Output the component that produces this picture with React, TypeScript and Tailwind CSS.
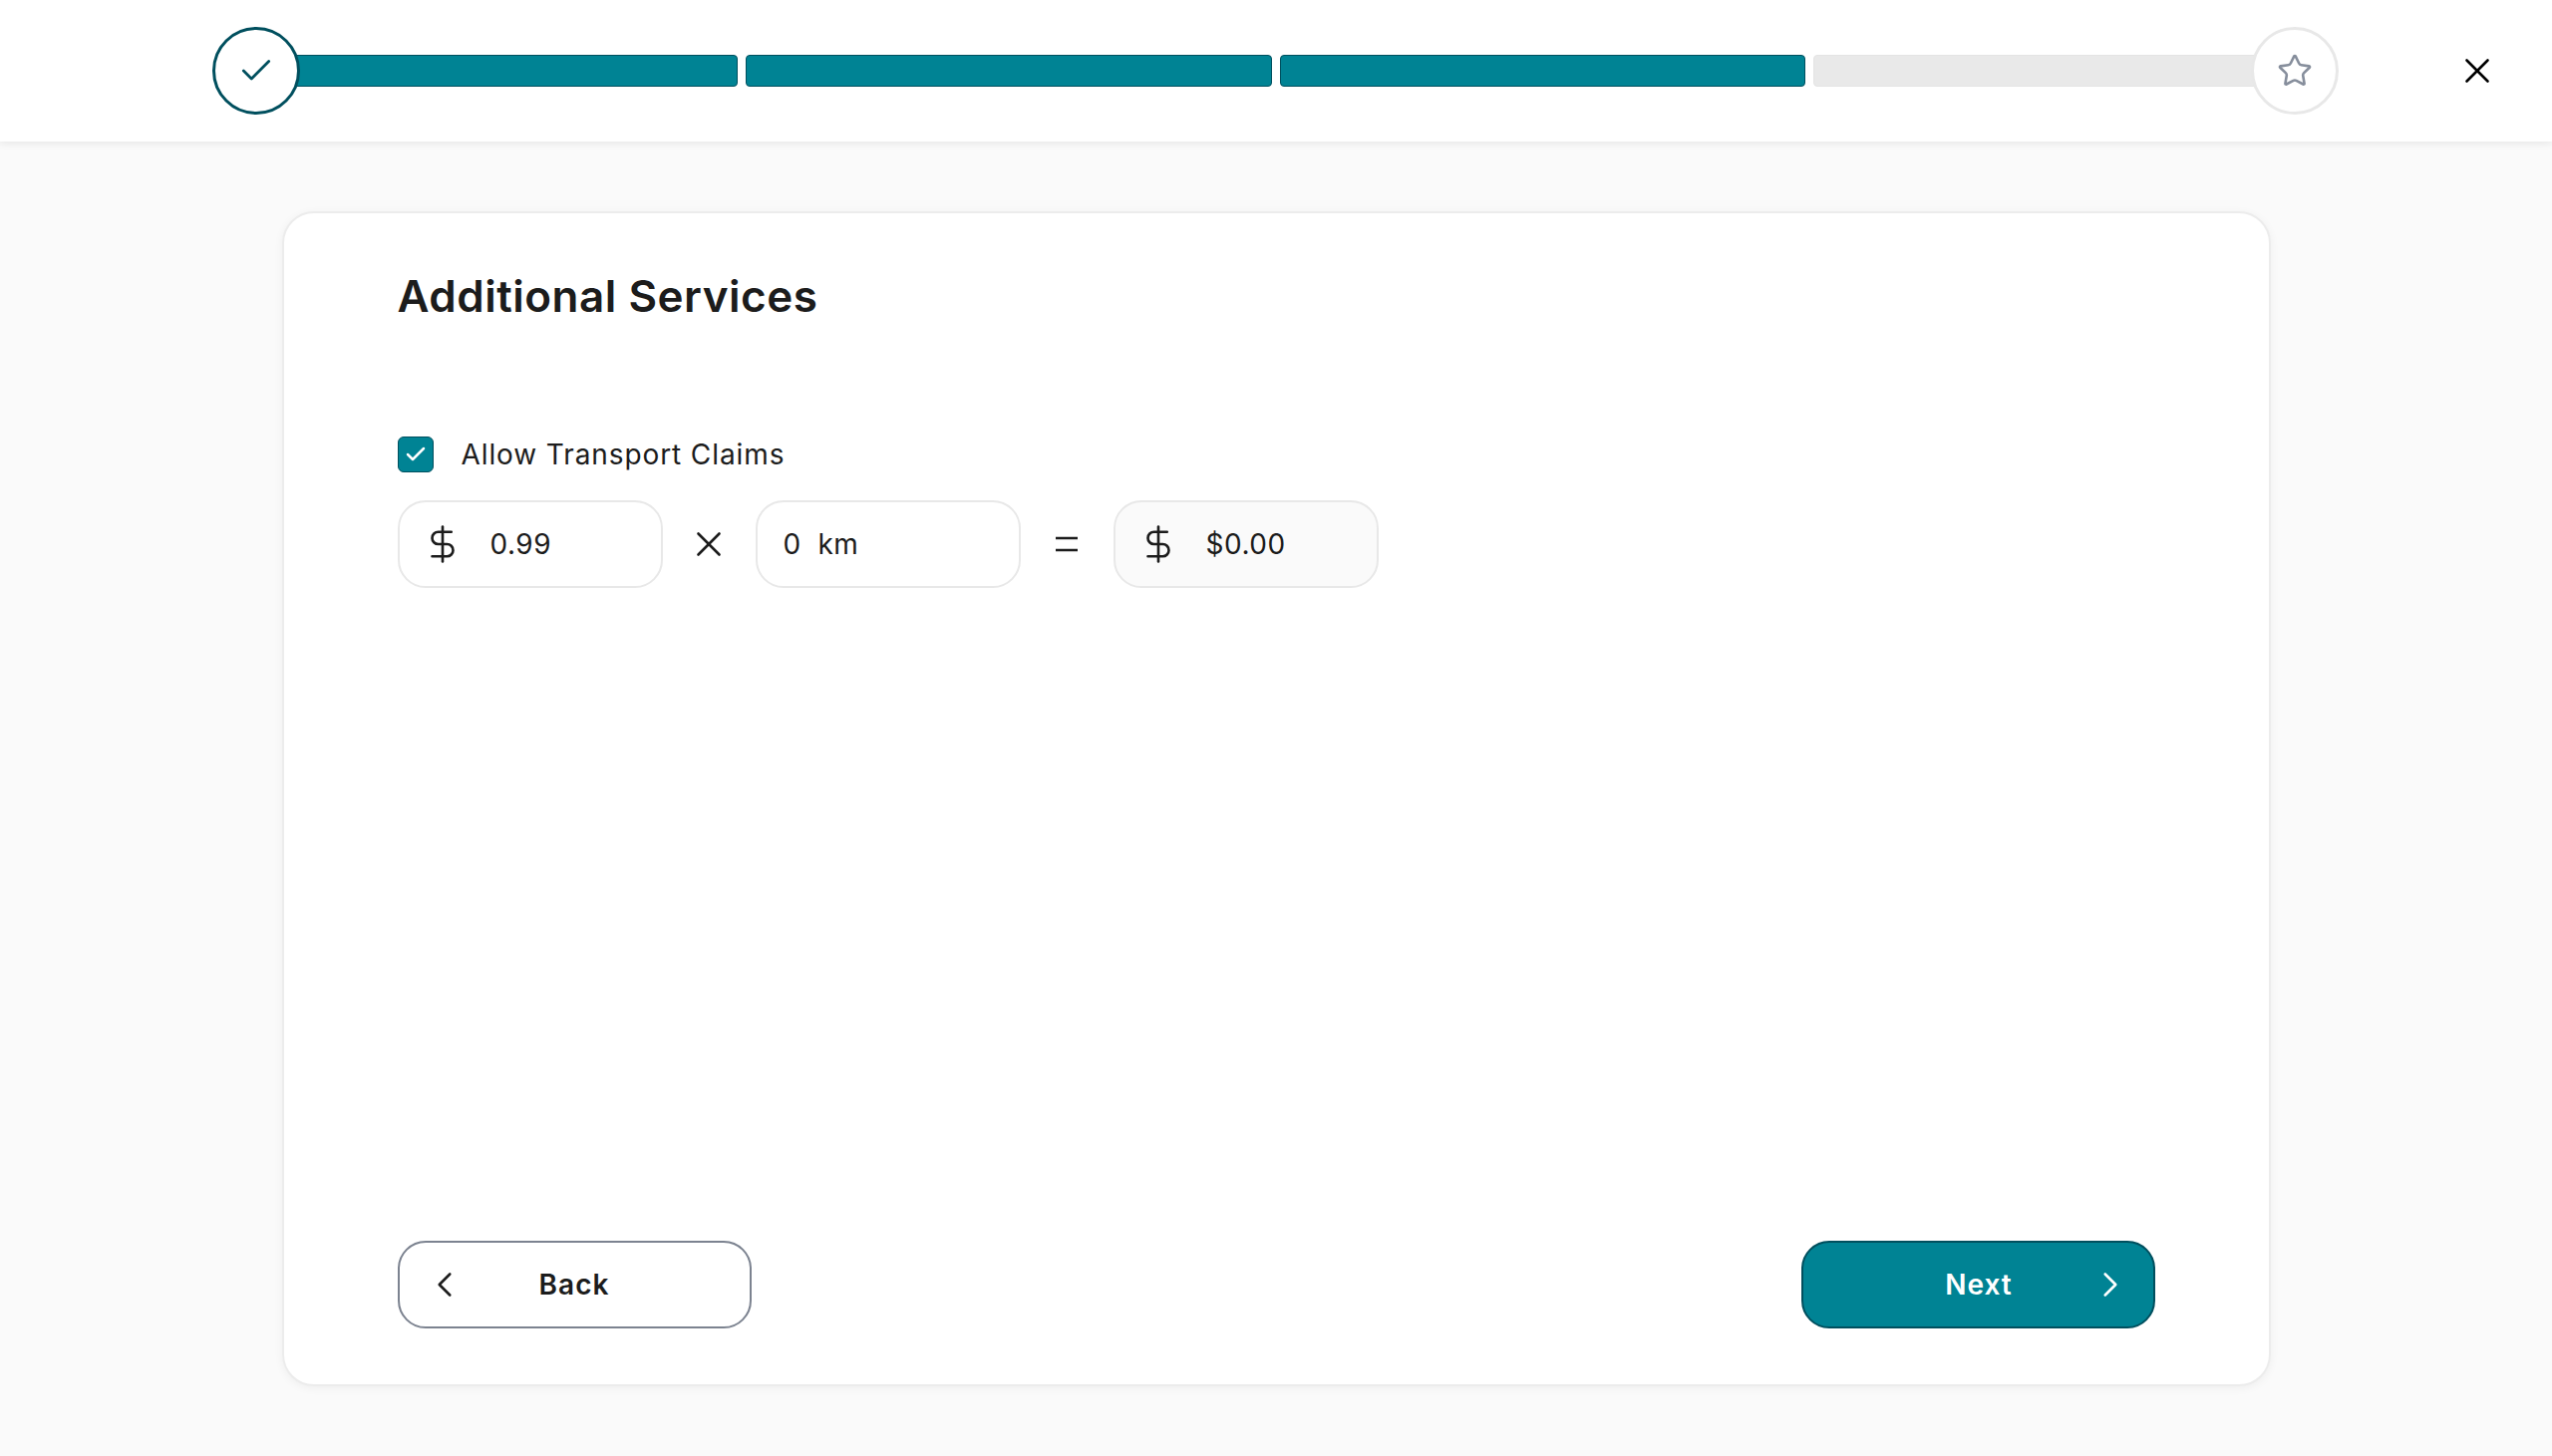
import { Check, ChevronLeft, ChevronRight, DollarSign, Star, X } from 'lucide-react';

const font = "font-['Inter','Noto_Sans',sans-serif]";

const ProgressBar = () => {
  return (
    <div className="relative grid flex-1 grid-cols-4 items-center gap-2">
      <div className="ml-10 h-8 rounded-[4px] border border-[#004f5e] bg-[#008394]" />
      <div className="h-8 rounded-[4px] border border-[#004f5e] bg-[#008394]" />
      <div className="h-8 rounded-[4px] border border-[#004f5e] bg-[#008394]" />
      <div className="mr-10 h-8 rounded-[4px] border border-[#e4e4e4] bg-[#e9e9e9]" />
      <div className="absolute left-0 top-[-28px] flex h-[88px] w-[88px] items-center justify-center rounded-full border-[3px] border-[#004f5e] bg-white">
        <Check size={38} strokeWidth={1.75} className="text-[#004f5e]" />
      </div>
      <div className="absolute right-0 top-[-28px] flex h-[88px] w-[88px] items-center justify-center rounded-full border-[3px] border-[#e8e8e8] bg-white">
        <Star size={36} strokeWidth={1.75} className="text-[#868e9c]" />
      </div>
    </div>
  );
};

const Field = ({ dollar, value, shaded }: { dollar?: boolean; value: string; shaded?: boolean }) => (
  <div
    className={`flex h-[88px] w-[266px] items-center rounded-[28px] border-2 border-[#e8e8e8] text-[28px] tracking-[0.5px] text-[#1c1c1c] ${
      shaded ? 'bg-[#fafafa]' : 'bg-white'
    } ${dollar ? 'pl-[22px]' : 'pl-[26px]'}`}
  >
    {dollar && <DollarSign size={42} strokeWidth={1.5} className="mr-[27px] shrink-0 text-[#1c1c1c]" />}
    <span className="whitespace-pre">{value}</span>
  </div>
);

const App = () => {
  return (
    <div className={`flex min-h-[1461px] flex-col bg-[#fafafa] ${font}`}>
      <header className="flex h-[142px] items-center bg-white pl-[213px] pr-[54px] shadow-[0_2px_8px_rgba(0,0,0,0.08)]">
        <ProgressBar />
        <button className="ml-[118px] flex h-[42px] w-[42px] items-center justify-center text-black">
          <X size={42} strokeWidth={1.5} />
        </button>
      </header>

      <main className="flex flex-1 justify-center pt-[70px]">
        <section className="flex h-[1179px] w-[1995px] flex-col justify-between rounded-[32px] border-2 border-[#ececec] bg-white px-[114px] pb-[56px] pt-[57px] shadow-[0_2px_10px_rgba(0,0,0,0.05)]">
          <div>
            <h1 className="text-[44px] font-semibold leading-[52px] tracking-[0.5px] text-[#1c1c1c]">Additional Services</h1>

            <label className="mt-[115px] flex items-center gap-[28px] text-[28px] leading-9 tracking-[0.9px] text-[#1c1c1c]">
              <span className="flex h-9 w-9 items-center justify-center rounded-[6px] border border-[#004f5e] bg-[#008394]">
                <Check size={24} strokeWidth={2.5} className="text-white" />
              </span>
              Allow Transport Claims
            </label>

            <div className="mt-[28px] flex items-center">
              <Field dollar value="0.99" />
              <div className="flex w-[93px] items-center justify-center text-[#1c1c1c]">
                <X size={42} strokeWidth={1.5} />
              </div>
              <Field value="0  km" />
              <div className="flex w-[93px] items-center justify-center">
                <svg width="22" height="16" viewBox="0 0 22 16" fill="none" stroke="#1c1c1c" strokeWidth="2.5">
                  <path d="M0 2h22M0 14h22" />
                </svg>
              </div>
              <Field dollar shaded value="$0.00" />
            </div>
          </div>

          <div className="flex justify-between">
            <button className="grid h-[88px] w-[355px] grid-cols-[1fr_auto_1fr] items-center rounded-[28px] border-2 border-[#7c8390] bg-white px-6 text-[28px] font-semibold tracking-[1px] text-[#1c1c1c]">
              <ChevronLeft size={42} strokeWidth={1.5} />
              <span>Back</span>
              <span />
            </button>
            <button className="grid h-[88px] w-[355px] grid-cols-[1fr_auto_1fr] items-center rounded-[28px] border-2 border-[#004f5e] bg-[#008394] pl-6 pr-[22px] text-[28px] font-semibold tracking-[1px] text-white">
              <span />
              <span>Next</span>
              <ChevronRight size={42} strokeWidth={1.5} className="justify-self-end" />
            </button>
          </div>
        </section>
      </main>
    </div>
  );
};

export default App;
